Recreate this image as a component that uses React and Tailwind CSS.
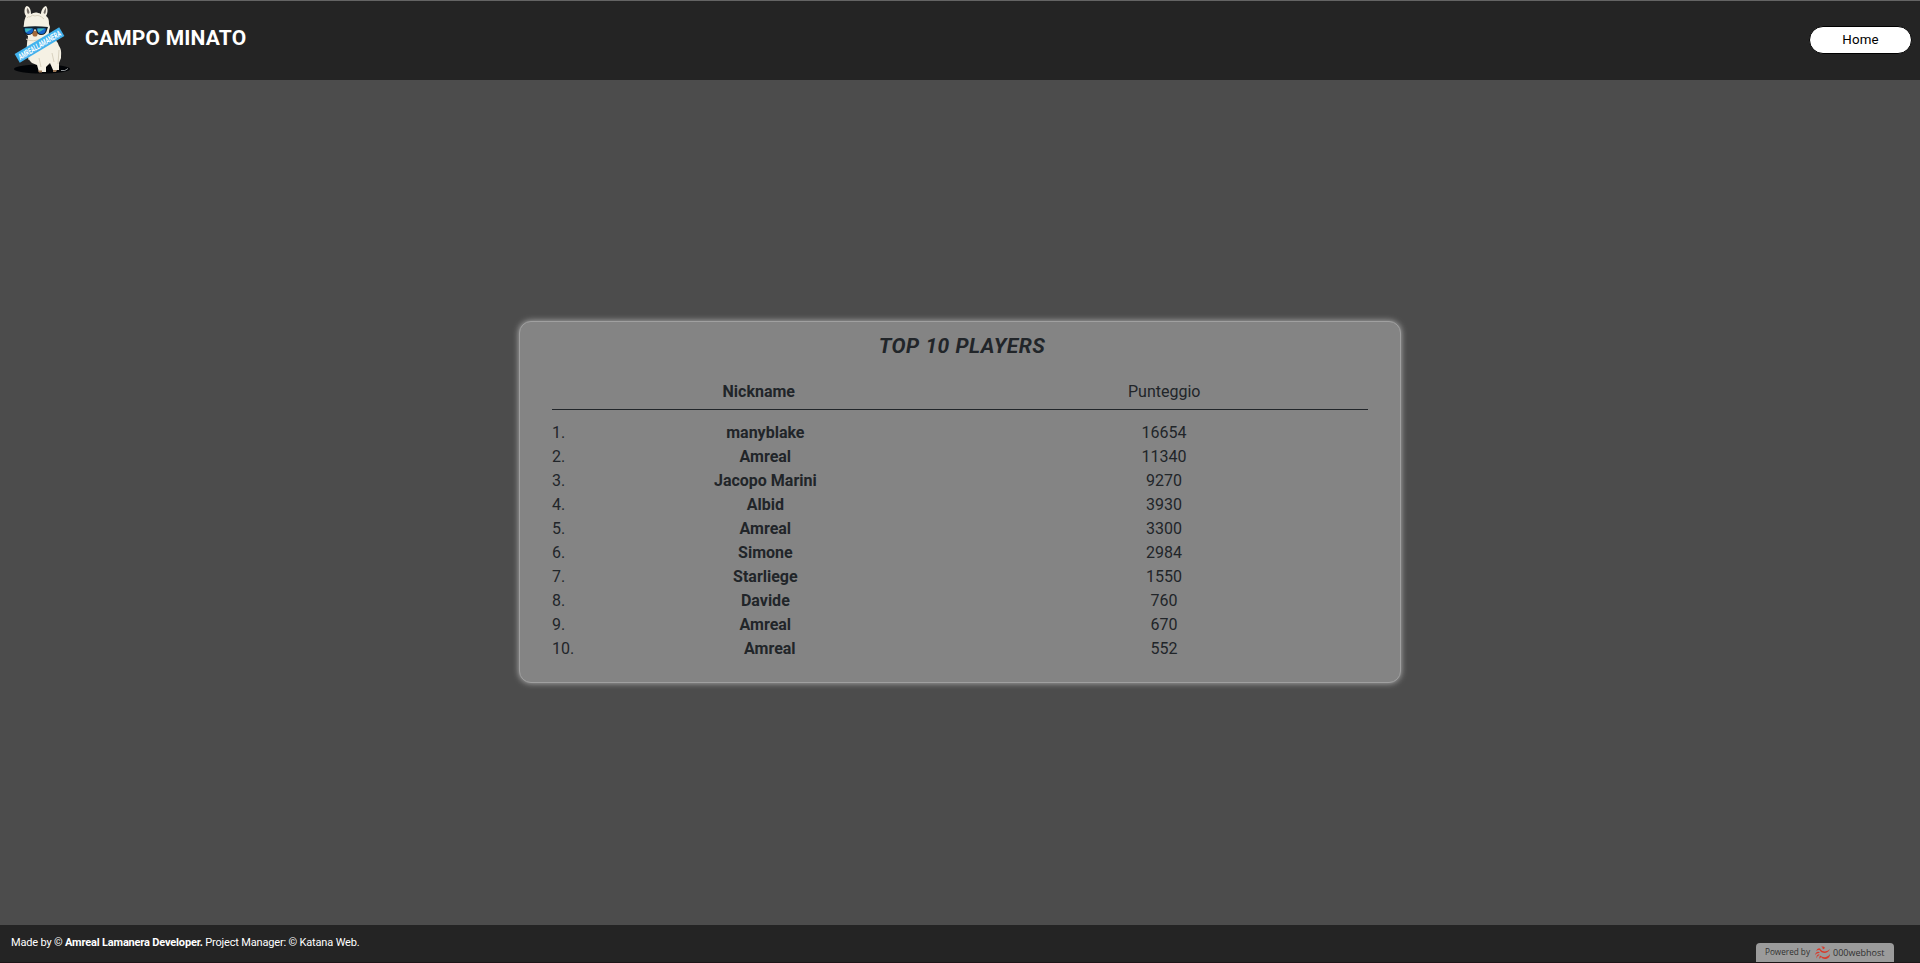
const players = [
  ["manyblake", 16654],
  ["Amreal", 11340],
  ["Jacopo Marini", 9270],
  ["Albid", 3930],
  ["Amreal", 3300],
  ["Simone", 2984],
  ["Starliege", 1550],
  ["Davide", 760],
  ["Amreal", 670],
  ["Amreal", 552],
];

function AlpacaLogo() {
  return (
    <svg className="h-[72px] w-[60px] overflow-visible" viewBox="0 0 60 72" fill="none">
      <ellipse cx="28" cy="66" rx="28" ry="4.500" fill="#020407" />
      <path d="M47 67.500q4 1 7-2" stroke="#b5babd" strokeWidth=".8" />
      <path d="M12 13C9 9 11 3 13 3c3 1 4 4 4 8 3-2 6-2 10 0 0-4 3-8 5-8 2 2 2 7 0 10 3 2 3 5 3 8l1 3-1 4c0 4-1 5-1 7l5 2c4 0 5 3 6 6 3 4 2 8 2 12l-2 5v7h-6l-3-7-4 4v5h-7l-2-7-5-2c-5-4-6-11-5-19 0-3 1-6 1-8-4-3-5-7-4-12 0-3 1-6 2-8z" fill="#f5f1e4" />
      <path d="M14 11c-2-3-1-6-.5-6 1 1 2 3 2 5zM29.500 10c.5-3 2-5 2.500-5 0 3 0 4-1 6z" fill="#77706a" />
      <path d="M13 15q1-2 3-1 2-3 5-1 4-2 9 3M12 36q6 4 17-1M38 50l2 9M25 55l2 9M45 47l-1 14M14 49l1 8" stroke="#d9d2bf" strokeWidth="1" />
      <path d="M18 30q3-5 6 0l-1 3q-2 1-4 0z" fill="#a66b3b" />
      <path d="M9 24q12-1.500 25 0l-1 3q-1 5-6 5-4 0-5-5l-1-1-1 1q-1 5-6 5-4 0-5-5z" fill="#10202c" />
      <path d="M10.500 25.500h9q-.5 5.500-4.500 5.500t-4.500-5.500zM22.500 25.500H32q-.5 5.500-4.500 5.500t-5-5.500z" fill="#1765cc" />
      <path d="M11 25.500h7.500q-3 2-6.500 4-1-2-1-4zM23.500 25.500H31q-3 2-6.500 4-1-2-1-4z" fill="#3eb9bd" />
      <path d="M24 67.500h4v2h-3zM39 67h4l-1 2h-3z" fill="#9d7958" />
      <g transform="translate(25.500 42) rotate(-31)">
        <rect x="-26" y="-5" width="52" height="10" fill="#42b2ed" />
        <text x="0" y="3" textAnchor="middle" textLength="48" lengthAdjust="spacingAndGlyphs" fill="#ffffff" className="font-['Roboto',sans-serif] text-[8.500px] font-bold italic">AMREALLAMANERA</text>
      </g>
    </svg>
  );
}

function HostMark() {
  return (
    <svg className="h-[14px] w-[17px]" viewBox="0 0 17 14" fill="#d93a2b">
      <path d="M2 5Q3.500 1.500 6 2.500 7.500 5.500 11 5.500 14 5 16 3 14.500 6.500 11 7 7 7 5.500 4 4 3.500 2 5z" />
      <path d="M7 .8Q10 0 11 2q-1.500 1.500-2.500 1Q9.500 1.500 7 .8z" />
      <path d="M1 9Q2 5.500 4.500 5.800L6 7Q3 6.500 1 9zM2.500 12.500Q2 8.500 5 8.200L5.500 9Q3 9.500 2.500 12.500z" />
      <path d="M6 9.500q3 2.500 6 1.500 3-1 4-3 0 4-4 5-3.500.5-5-2l-1.500 2q-.5-2 .5-3.500z" />
    </svg>
  );
}

export default function App() {
  return (
    <div className="flex h-screen flex-col bg-[#4c4c4c] font-['Roboto',sans-serif] text-[#212529]">
      <header className="flex h-20 items-start justify-between border-t border-[#646464] bg-[#242424] pr-[8px] pl-[14px]">
        <div className="flex items-start">
          <div className="pt-[2px]"><AlpacaLogo /></div>
          <h1 className="ml-[11px] pt-[22px] text-[21px] leading-[30px] font-bold tracking-[0.2px] whitespace-nowrap text-white">CAMPO MINATO</h1>
        </div>
        <button className="mt-[25px] h-7 w-[103px] rounded-full border border-black bg-white text-[13.333px] leading-[24px] tracking-[0.1px] text-black">Home</button>
      </header>

      <main className="flex flex-1 flex-col items-center pt-[241px]">
        <section className="h-[362px] w-[882px] rounded-[12px] border border-[#a0a0a0] bg-[#848484] px-8 pt-[10px] shadow-[0_0_6px_#b4b4b4]">
          <h2 className="pl-1 text-center text-[21px] leading-[28px] font-bold tracking-[0.5px] italic">TOP 10 PLAYERS</h2>
          <div className="mt-[20px] flex h-[30px] border-b border-[#212529] text-base leading-6">
            <div className="flex-1 pl-[4px] text-center font-bold">Nickname</div>
            <div className="flex-1 pr-[1px] text-center">Punteggio</div>
          </div>
          <ol className="mt-[11px] text-base leading-6">
            {players.map(([name, score], i) => (
              <li key={i} className="flex">
                <div className="flex flex-1">
                  <span>{i + 1}.</span>
                  <b className="flex-1 pl-[5.500px] text-center font-bold">{name}</b>
                </div>
                <span className="flex-1 text-center">{score}</span>
              </li>
            ))}
          </ol>
        </section>
      </main>

      <footer className="flex h-[38px] items-start justify-between border-b border-[#1c1517] bg-[#242424] pr-[26px] pl-[11px]">
        <p className="pt-[10px] text-[11px] leading-4 tracking-[-0.170px] text-white">
          Made by © <b>Amreal Lamanera Developer.</b> Project Manager: © Katana Web.
        </p>
        <div className="mt-[18px] flex h-[19px] w-[138px] items-center rounded-t-[4px] bg-[#9b9b9b] pl-[9px] text-[#303030]">
          <span className="w-[49px] font-['Open_Sans',sans-serif] text-[8.200px] whitespace-nowrap">Powered by</span>
          <HostMark />
          <span className="ml-[2px] font-['Open_Sans',sans-serif] text-[9px] font-medium whitespace-nowrap">000webhost</span>
        </div>
      </footer>
    </div>
  );
}
